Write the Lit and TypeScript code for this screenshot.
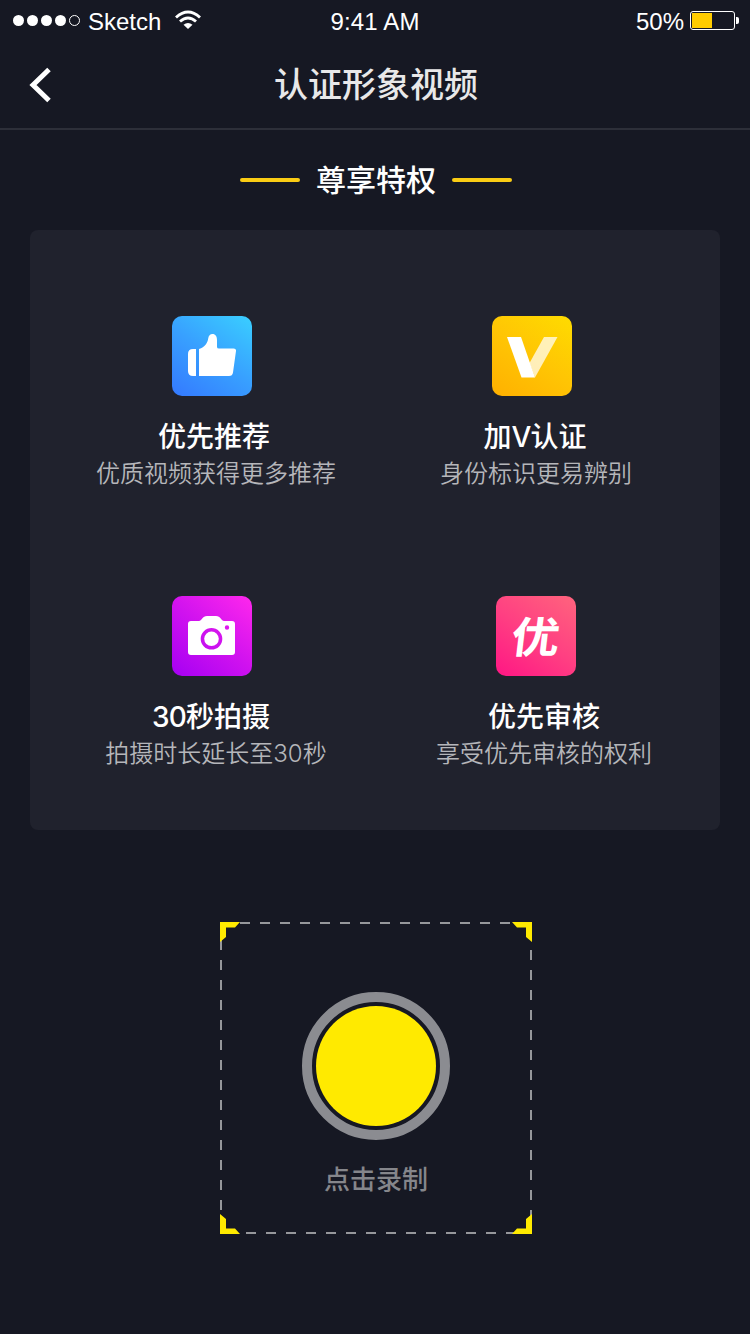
import { LitElement, html, css, svg } from "lit";
import { customElement } from "lit/decorators.js";

const thumb = svg`
  <path d="M24 33H21Q16 33 16 38V55Q16 60 21 60H24Z"/>
  <path d="M27 33C33 31 35.5 27 36.2 22.5C36.7 19.5 38 18 40.5 18C43.5 18 45 20.5 45 24V31Q45 32.500 47 32.500H61.500Q64.300 32.500 64 35L61 56.500Q60.500 60 57 60H27Z"/>`;

const vee = svg`
  <path d="M52 21H65.500L43 61.500L37.500 47Z" fill="#fff" fill-opacity=".72"/>
  <path d="M15 21H29L43 61.500H29.500Z"/>`;

const camera = svg`
  <path fill-rule="evenodd" d="M19 25H27C29.500 25 30.500 20 35 20H44C48.500 20 49.500 25 52 25H60Q63 25 63 28V56Q63 59 60 59H19Q16 59 16 56V28Q16 25 19 25ZM39.500 32A10.800 10.800 0 1 0 39.500 53.600A10.800 10.800 0 1 0 39.500 32ZM55 29.300A2.200 2.200 0 1 0 55 33.700A2.200 2.200 0 1 0 55 29.300Z"/>
  <circle cx="39.500" cy="42.800" r="7.300"/>`;

@customElement("app-root")
export class AppRoot extends LitElement {
  static styles = css`
    :host {
      display: flex;
      flex-direction: column;
      align-items: center;
      box-sizing: border-box;
      width: 750px;
      height: 1334px;
      overflow: hidden;
      background: #161823;
      color: #fff;
      font-family: Inter, "Noto Sans CJK SC", sans-serif;
    }
    svg { display: block; }
    .status {
      display: grid;
      grid-template-columns: 1fr auto 1fr;
      align-items: center;
      width: 100%;
      height: 40px;
      box-sizing: border-box;
      padding: 2px 10px 0 12px;
      font: 24px/36px "Liberation Sans", Arial, sans-serif;
    }
    .status span { padding-top: 2px; }
    .status .time { margin-right: 2px; letter-spacing: .15px; }
    .carrier { display: flex; align-items: center; }
    .carrier span { margin: 0 13px 0 7px; }
    .wifi { margin-bottom: 2px; }
    .power { display: flex; align-items: center; justify-content: flex-end; gap: 6px; }
    .nav {
      display: grid;
      grid-template-columns: 60px 1fr 60px;
      align-items: center;
      width: 100%;
      height: 90px;
      box-sizing: border-box;
      border-bottom: 2px solid #2d2f39;
    }
    .back { margin: 2px 0 0 29px; }
    .nav h1 {
      margin: 2px 0 0 2px;
      color: #e8e8e9;
      font-size: 34px;
      font-weight: 500;
      line-height: 50px;
      text-align: center;
    }
    .section {
      display: flex;
      align-items: center;
      gap: 16px;
      height: 100px;
      margin-left: 2px;
    }
    .section i { width: 60px; height: 4px; border-radius: 2px; background: #facc14; }
    .section h2 { margin: 0; font-size: 30px; font-weight: 500; line-height: 44px; }
    .panel {
      display: grid;
      grid-template-columns: 320px 320px;
      grid-template-rows: 280px 280px;
      width: 690px;
      height: 600px;
      box-sizing: border-box;
      padding: 86px 24px 0 26px;
      border-radius: 8px;
      background: #20222d;
    }
    .item { display: flex; flex-direction: column; align-items: center; }
    .tile { width: 80px; height: 80px; border-radius: 10px; fill: #fff; margin-right: 8px; }
    .like { background: linear-gradient(215deg, #3acfff, #38a0ff 50%, #3479ff); }
    .verify { background: linear-gradient(215deg, #fedc00, #ffc504 50%, #ffb000); }
    .shoot { background: linear-gradient(220deg, #ff28ec, #d012ef 50%, #a500f3); }
    .best { background: linear-gradient(215deg, #ff647d, #ff4082 50%, #ff1684); margin-right: 0; overflow: hidden; }
    .best span {
      display: block;
      width: 80px;
      font: 700 43px/76px "Noto Sans CJK SC", sans-serif;
      text-align: center;
      transform: scaleX(1.12) skewX(-6deg);
    }
    .item h3 { margin: 20px 0 0; font-size: 28px; font-weight: 500; line-height: 42px; white-space: nowrap; }
    .item p { margin: -2px 0 0; color: #b5b6ba; font-size: 24px; font-weight: 350; line-height: 36px; white-space: nowrap; }
    .latin { letter-spacing: -.8px; }
    .like-item h3 { margin-right: 4px; }
    .verify-item h3 { margin-right: 2px; }
    .shoot-item h3 { margin-right: 10px; }
    .best-item h3, .best-item p { margin-left: 16px; }
    .recorder {
      display: grid;
      width: 312px;
      height: 312px;
      margin: 92px 0 0 2px;
    }
    .recorder > * { grid-area: 1 / 1; }
    .record { display: flex; flex-direction: column; align-items: center; padding-top: 70px; }
    .shutter {
      width: 148px;
      height: 148px;
      box-sizing: border-box;
      padding: 4px;
      border: 10px solid #8b8c91;
      border-radius: 50%;
    }
    .shutter::before {
      content: "";
      display: block;
      width: 120px;
      height: 120px;
      border-radius: 50%;
      background: #ffea00;
    }
    .record p { margin: 20px 0 0; color: #85868b; font-size: 26px; font-weight: 500; line-height: 40px; }
  `;

  render() {
    return html`
      <header class="status">
        <div class="carrier">
          <svg width="69" height="14" fill="#fff">
            <circle cx="6.500" cy="6.500" r="5.500"/><circle cx="20.500" cy="6.500" r="5.500"/>
            <circle cx="34.500" cy="6.500" r="5.500"/><circle cx="48.500" cy="6.500" r="5.500"/>
            <circle cx="62.500" cy="6.500" r="5" fill="none" stroke="#fff"/>
          </svg>
          <span>Sketch</span>
          <svg class="wifi" width="28" height="20" viewBox="0 0 28 20" fill="none" stroke="#fff" stroke-width="2.900">
            <path d="M2 7.500Q14 -3.500 26 7.500"/><path d="M6 11.500Q14 4.500 22 11.500"/>
            <path d="M9.500 14.700Q14 11.300 18.500 14.700L14 19Z" fill="#fff" stroke="none"/>
          </svg>
        </div>
        <span class="time">9:41 AM</span>
        <div class="power">
          <span>50%</span>
          <svg width="50" height="20" fill="#fff">
            <rect x=".5" y=".5" width="44" height="18" rx="2.500" fill="none" stroke="#fff"/>
            <rect x="2" y="2" width="20" height="15" fill="#ffcc00"/>
            <path d="M46 6H47Q49 6 49 8V11Q49 13 47 13H46Z"/>
          </svg>
        </div>
      </header>
      <nav class="nav">
        <svg class="back" width="24" height="36" viewBox="0 0 24 36" fill="none" stroke="#fff" stroke-width="5">
          <path d="M20 2.500L4 18L20 33.500"/>
        </svg>
        <h1>认证形象视频</h1>
      </nav>
      <div class="section"><i></i><h2>尊享特权</h2><i></i></div>
      <section class="panel">
        <div class="item like-item">
          <svg class="tile like" viewBox="0 0 80 80">${thumb}</svg>
          <h3>优先推荐</h3><p>优质视频获得更多推荐</p>
        </div>
        <div class="item verify-item">
          <svg class="tile verify" viewBox="0 0 80 80">${vee}</svg>
          <h3>加<span class="latin">V</span>认证</h3><p>身份标识更易辨别</p>
        </div>
        <div class="item shoot-item">
          <svg class="tile shoot" viewBox="0 0 80 80">${camera}</svg>
          <h3><span class="latin">30</span>秒拍摄</h3><p>拍摄时长延长至30秒</p>
        </div>
        <div class="item best-item">
          <div class="tile best"><span>优</span></div>
          <h3>优先审核</h3><p>享受优先审核的权利</p>
        </div>
      </section>
      <div class="recorder">
        <svg width="312" height="312">
          <g stroke="#96979b" stroke-width="2" stroke-dasharray="10 10">
            <path d="M20 1H300"/><path d="M1 18V28" stroke-dasharray="none"/><path d="M1 38V300"/>
            <path d="M311 28V300"/><path d="M26 311H300"/>
          </g>
          <g fill="#ffea00">
            <path d="M0 0H20L15 5.500H6V15L0 20Z"/>
            <path d="M312 0H292L297 5.500H306V15L312 20Z"/>
            <path d="M0 312H20L15 306.500H6V297L0 292Z"/>
            <path d="M312 312H292L297 306.500H306V297L312 292Z"/>
          </g>
        </svg>
        <div class="record"><div class="shutter"></div><p>点击录制</p></div>
      </div>
    `;
  }
}
